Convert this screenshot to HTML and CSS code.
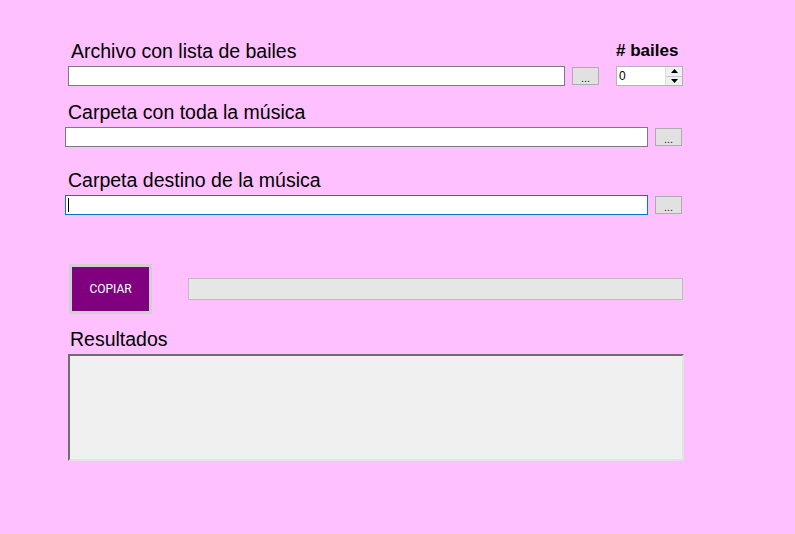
FILE: index.html
```html
<!DOCTYPE html>
<html lang="es">
<head>
<meta charset="utf-8">
<title>Copiar música</title>
<link rel="stylesheet" href="styles.css">
</head>
<body>
<div class="form">
  <div class="head1">
    <span class="lbl lbl-a">Archivo con lista de bailes</span>
    <span class="lbl-b"># bailes</span>
  </div>
  <div class="row row1">
    <div class="tb tb1"></div>
    <div class="btn-dots">...</div>
    <div class="spin">
      <span class="spin-val">0</span>
      <div class="spin-btns">
        <div class="spin-up"><svg width="7" height="4" viewBox="0 0 7 4"><path d="M3.5 0 L7 4 L0 4 Z" fill="#000"/></svg></div>
        <div class="spin-down"><svg width="7" height="4" viewBox="0 0 7 4"><path d="M0 0 L7 0 L3.5 4 Z" fill="#000"/></svg></div>
      </div>
    </div>
  </div>

  <div class="lbl lbl-2">Carpeta con toda la música</div>
  <div class="row row2">
    <div class="tb tb2"></div>
    <div class="btn-dots">...</div>
  </div>

  <div class="lbl lbl-3">Carpeta destino de la música</div>
  <div class="row row2">
    <div class="tb tb2 focused"><span class="caret"></span></div>
    <div class="btn-dots">...</div>
  </div>

  <div class="actions">
    <div class="btn-copy">COPIAR</div>
    <div class="progress"></div>
  </div>

  <div class="lbl lbl-res">Resultados</div>
  <div class="results"></div>
</div>
</body>
</html>
```

FILE: styles.css
```css
html, body {
  margin: 0;
  padding: 0;
}
body {
  background: #ffc0ff;
  font-family: "Liberation Sans", Arial, sans-serif;
  color: #000;
  width: 795px;
  height: 534px;
  overflow: hidden;
}
.form {
  padding-top: 40px;
}
.lbl {
  font-size: 19.5px;
  line-height: 22px;
  height: 22px;
  white-space: nowrap;
}
.head1 {
  display: grid;
  grid-template-columns: 616px auto;
  height: 22px;
  margin-bottom: 4px;
}
.lbl-a {
  padding-left: 71px;
}
.lbl-b {
  font-size: 17px;
  font-weight: bold;
  line-height: 22px;
}
.row {
  display: flex;
  align-items: center;
  height: 20px;
}
.row1 {
  padding-left: 68px;
}
.tb {
  box-sizing: border-box;
  height: 20px;
  background: #fff;
  border: 1px solid #7a7a7a;
  position: relative;
}
.tb1 {
  width: 497px;
}
.btn-dots {
  box-sizing: border-box;
  width: 27px;
  height: 18px;
  margin-left: 7px;
  background: #e1e1e1;
  border: 1px solid #adadad;
  font-size: 11px;
  line-height: 16px;
  text-align: center;
  padding-top: 2px;
  color: #222;
}
.spin {
  box-sizing: border-box;
  margin-left: 17px;
  width: 67px;
  height: 20px;
  background: #fff;
  border: 1px solid #b4b4b4;
  display: flex;
}
.spin-val {
  flex: 1;
  font-size: 12px;
  line-height: 18px;
  padding-left: 2px;
}
.spin-btns {
  width: 16px;
  display: flex;
  flex-direction: column;
  border-left: 1px solid #e0e0e0;
}
.spin-up, .spin-down {
  flex: 1;
  display: flex;
  align-items: center;
  justify-content: center;
  background: #f0f0f0;
}
.spin-up {
  border-bottom: 1px solid #c8c8c8;
}
.lbl-2 {
  margin-top: 15px;
  margin-bottom: 4px;
  padding-left: 68px;
}
.row2 {
  padding-left: 65px;
}
.tb2 {
  width: 583px;
}
.lbl-3 {
  margin-top: 22px;
  margin-bottom: 4px;
  padding-left: 68px;
}
.focused {
  border-color: #0078d7;
}
.caret {
  position: absolute;
  left: 2px;
  top: 2px;
  width: 1px;
  height: 14px;
  background: #000;
}
.actions {
  margin-top: 49px;
  padding-left: 69px;
  display: flex;
  align-items: center;
  height: 50px;
}
.btn-copy {
  box-sizing: border-box;
  width: 83px;
  height: 50px;
  background: #800080;
  border: 3px solid #d0d0d0;
  color: #fff;
  font-family: Roboto, "Liberation Sans", sans-serif;
  font-size: 12px;
  display: flex;
  align-items: center;
  justify-content: center;
}
.progress {
  box-sizing: border-box;
  margin-left: 36px;
  width: 495px;
  height: 22px;
  background: #e6e6e6;
  border: 1px solid #bcbcbc;
}
.lbl-res {
  margin-top: 14px;
  margin-bottom: 4px;
  padding-left: 70px;
}
.results {
  box-sizing: border-box;
  margin-left: 68px;
  width: 616px;
  height: 107px;
  background: #f0f0f0;
  border-top: 2px solid #6d6d6d;
  border-left: 2px solid #6d6d6d;
  border-right: 2px solid #e3e3e3;
  border-bottom: 2px solid #e3e3e3;
}
```
